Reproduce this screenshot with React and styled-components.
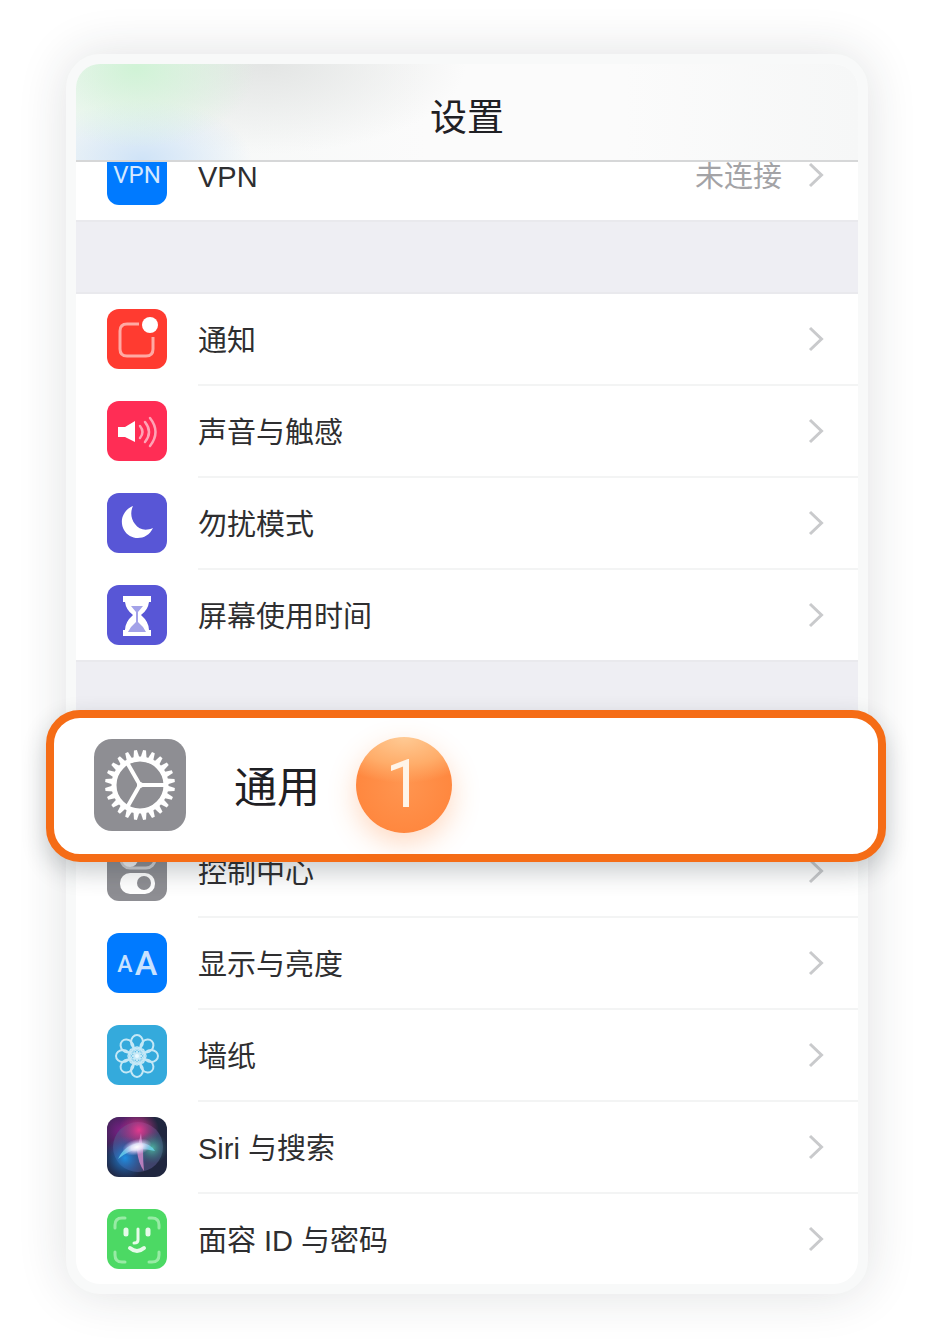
import React from "react";
import styled, { createGlobalStyle } from "styled-components";

const GlobalStyle = createGlobalStyle`
  * {
    box-sizing: border-box;
  }
  body {
    margin: 0;
    background: #ffffff;
    font-family: "Liberation Sans", "Noto Sans CJK SC", sans-serif;
    color: #2e2e30;
  }
`;

const Page = styled.main`
  padding: 54px 62px 50px 66px;
`;

const Phone = styled.div`
  border: 10px solid #f8f9f9;
  border-radius: 34px;
  background-color: white;
  box-shadow: 0 0 50px rgba(35, 40, 50, 0.14);
`;

const Header = styled.header`
  position: relative;
  z-index: 1;
  display: flex;
  align-items: center;
  justify-content: center;
  height: 98px;
  padding-top: 14px;
  border-bottom: 2px solid #d6d7d8;
  border-radius: 24px 24px 0 0;
  background:
    radial-gradient(ellipse 120px 80px at 60px 4px, #d0f3d6, transparent),
    radial-gradient(ellipse 110px 60px at 66px 96px, #cfe3f7, transparent),
    radial-gradient(ellipse 200px 90px at 190px 0, #e3e5e4, transparent),
    linear-gradient(90deg, #f4f7f6, #fbfbfb 45%, #fbfbfb 70%, #f6f7f7);
`;

const Title = styled.h1`
  margin: 0;
  font-size: 37px;
  line-height: 48px;
  font-weight: 400;
  color: #1f2024;
`;

const Content = styled.div`
  margin-top: -32px;
`;

const Group = styled.ul`
  margin: 0;
  padding: 0;
  list-style: none;
`;

const Gap = styled.div`
  height: 74px;
  background-color: #eeeef3;
  border-top: 2px solid #e9e9ed;
  border-bottom: 2px solid #e9e9ed;
`;

const Item = styled.li`
  position: relative;
`;

const Row = styled.a`
  display: flex;
  gap: 31px;
  padding-left: 31px;
  color: inherit;
  text-decoration: none;
`;

const Body = styled.span`
  flex: 1;
  display: flex;
  align-items: center;
  height: ${(props) => (props.$last ? "90px" : "92px")};
  padding-right: 34px;
  border-bottom: ${(props) => (props.$last ? "none" : "2px solid #f3f4f4")};
`;

const Label = styled.span`
  flex: 1;
  padding-top: 4px;
  font-size: 29px;
  line-height: 40px;
`;

const Value = styled.span`
  margin-right: 26px;
  padding-top: 4px;
  font-size: 29px;
  line-height: 40px;
  color: #a3a3a6;
`;

const Tile = styled.svg`
  flex: none;
  width: ${(props) => props.$size || 60}px;
  height: ${(props) => props.$size || 60}px;
  margin: ${(props) => (props.$size ? "0" : "15px 0")};
  border-radius: ${(props) => (props.$size ? "18px" : "12px")};
  background-color: ${(props) => props.$color};
`;

const Arrow = styled.svg`
  width: 16px;
  height: 26px;
`;

const Callout = styled.a`
  position: absolute;
  z-index: 2;
  top: -24px;
  bottom: -36px;
  left: -30px;
  right: -28px;
  display: flex;
  align-items: center;
  padding: 0 40px 2px;
  border: 8px solid #f56c16;
  border-radius: 34px;
  background-color: white;
  color: #1f2024;
  text-decoration: none;
  box-shadow: 0 10px 24px rgba(30, 40, 50, 0.24);
`;

const CalloutLabel = styled.span`
  margin: 0 36px 0 48px;
  padding-top: 6px;
  font-size: 43px;
  line-height: 56px;
`;

const Badge = styled.span`
  display: flex;
  align-items: center;
  justify-content: center;
  width: 96px;
  height: 96px;
  border-radius: 50%;
  background:
    radial-gradient(ellipse 80px 46px at 50% 0, #ffca94, #ffad6a 60%, transparent),
    radial-gradient(circle at 50% 50%, #ff9550, #ff8238);
  box-shadow: 0 10px 28px rgba(255, 130, 50, 0.3);
  color: #fff4e8;
  font-family: Roboto, "Liberation Sans", sans-serif;
  font-size: 66px;
  line-height: 64px;
  font-weight: 400;
`;

const Chevron = () => (
  <Arrow viewBox="0 0 16 26" fill="none" aria-hidden="true">
    <path d="M2 2 L13.500 13 L2 24" stroke="#c9cacc" strokeWidth="3" />
  </Arrow>
);

const VpnIcon = () => (
  <Tile viewBox="0 0 60 60" $color="#007aff" aria-hidden="true">
    <text x="30" y="38" textAnchor="middle" fontFamily="Roboto, sans-serif" fontSize="24" fill="#d3e8ff">
      VPN
    </text>
  </Tile>
);

const NoticeIcon = () => (
  <Tile viewBox="0 0 60 60" $color="#ff3b30" aria-hidden="true">
    <path
      d="M32 15 H20 Q13 15 13 22 V40 Q13 47 20 47 H39 Q46 47 46 40 V28"
      fill="none"
      stroke="#ffa9a3"
      strokeWidth="3"
    />
    <circle cx="43" cy="16" r="8" fill="#fff" />
  </Tile>
);

const SoundIcon = () => (
  <Tile viewBox="0 0 60 60" $color="#ff2d55" aria-hidden="true">
    <path d="M11 26 H18 L28 20 V41 L18 36 H11 Z" fill="#fff" />
    <g fill="none" stroke="#ffa3b5" strokeWidth="2.500" strokeLinecap="round">
      <path d="M33 25 Q38 31 33 37" />
      <path d="M38 21 Q46 31 38 41" />
      <path d="M43 17 Q54 31 43 45" />
    </g>
  </Tile>
);

const MoonIcon = () => (
  <Tile viewBox="0 0 60 60" $color="#5856d6" aria-hidden="true">
    <path
      d="M26 13 C16 17 12 28 17 37 C23 48 40 48 46 35 C39 38 32 37 28 31 C24 26 23 19 26 13 Z"
      fill="#fff"
    />
  </Tile>
);

const HourglassIcon = () => (
  <Tile viewBox="0 0 60 60" $color="#5856d6" aria-hidden="true">
    <path
      d="M16 11 H44 V17 H42 Q41 25 34 30 Q42 37 42 45 H44 V51 H16 V45 H18 Q18 37 26 30 Q19 25 18 17 H16 Z"
      fill="#fff"
    />
    <path d="M24 21 H36 L31 27 V37 Q36 41 39 47 H21 Q24 41 29 37 V27 Z" fill="#5856d6" opacity="0.55" />
  </Tile>
);

const teeth = Array.from({ length: 24 }, (_, i) => i * 15 + 7.5);

const GearIcon = () => (
  <Tile viewBox="0 0 92 92" $color="#8e8e93" $size={92} aria-hidden="true">
    <g transform="translate(46 46)" fill="#fff">
      {teeth.map((angle) => (
        <path key={angle} d="M27 -3 L35 -1.500 V1.500 L27 3 Z" transform={`rotate(${angle})`} />
      ))}
      <circle r="26" fill="none" stroke="#fff" strokeWidth="5" />
      {[0, 120, 240].map((angle) => (
        <path key={angle} d="M1 0 H25" stroke="#fff" strokeWidth="4" transform={`rotate(${angle})`} />
      ))}
      <circle r="3" />
    </g>
  </Tile>
);

const ControlIcon = () => (
  <Tile viewBox="0 0 60 60" $color="#8e8e93" aria-hidden="true">
    <rect x="14" y="9" width="34" height="18" rx="9" fill="none" stroke="#d0d0d3" strokeWidth="3" />
    <circle cx="23" cy="18" r="8" fill="#f2f2f3" />
    <rect x="13" y="32" width="35" height="21" rx="10" fill="#fff" />
    <circle cx="37" cy="42" r="7" fill="#8e8e93" />
  </Tile>
);

const DisplayIcon = () => (
  <Tile viewBox="0 0 60 60" $color="#007aff" aria-hidden="true">
    <g fontFamily="Roboto, sans-serif" fill="#c8e2ff" textAnchor="middle">
      <text x="18" y="39" fontSize="23" fontWeight="500">
        A
      </text>
      <text x="39" y="42" fontSize="34" fontWeight="500">
        A
      </text>
    </g>
  </Tile>
);

const petals = [0, 45, 90, 135, 180, 225, 270, 315];

const WallpaperIcon = () => (
  <Tile viewBox="0 0 60 60" $color="#34aadc" aria-hidden="true">
    <g transform="translate(30 31)" fill="none" stroke="#c5e8f6" strokeWidth="2">
      {petals.map((angle) => (
        <g key={angle} transform={`rotate(${angle})`}>
          <ellipse cx="0" cy="-14" rx="6" ry="7" />
          <ellipse cx="0" cy="-5" rx="3" ry="4" strokeWidth="1.500" />
        </g>
      ))}
      <circle r="3" fill="#e8f8ff" />
    </g>
  </Tile>
);

const SiriIcon = () => (
  <Tile viewBox="0 0 60 60" $color="#20263f" aria-hidden="true">
    <defs>
      <radialGradient id="siriPurple">
        <stop offset="0" stopColor="#7a1f86" />
        <stop offset="1" stopColor="#7a1f86" stopOpacity="0" />
      </radialGradient>
      <radialGradient id="siriPink">
        <stop offset="0" stopColor="#e23a8e" />
        <stop offset="1" stopColor="#c22c86" stopOpacity="0" />
      </radialGradient>
      <radialGradient id="siriBlue">
        <stop offset="0" stopColor="#1f8fe0" />
        <stop offset="1" stopColor="#2260b8" stopOpacity="0" />
      </radialGradient>
      <radialGradient id="siriTeal">
        <stop offset="0" stopColor="#4fb3a0" />
        <stop offset="1" stopColor="#2b6e77" stopOpacity="0" />
      </radialGradient>
      <radialGradient id="siriGlow">
        <stop offset="0" stopColor="#ffffff" />
        <stop offset="0.4" stopColor="#ece6fb" stopOpacity="0.9" />
        <stop offset="1" stopColor="#c9b8f5" stopOpacity="0" />
      </radialGradient>
    </defs>
    <circle cx="14" cy="14" r="28" fill="url(#siriPurple)" />
    <circle cx="31" cy="30" r="25" fill="#56568a" opacity="0.6" />
    <circle cx="32" cy="13" r="20" fill="url(#siriPink)" />
    <circle cx="18" cy="41" r="22" fill="url(#siriBlue)" />
    <circle cx="45" cy="31" r="16" fill="url(#siriTeal)" />
    <path d="M11 42 Q18 27 33 26 Q43 26 48 34 Q40 32 32 32 Q22 33 11 42 Z" fill="#6fd8f2" opacity="0.75" />
    <path d="M34 16 Q35 26 36 32 Q36 44 37 54 Q31 46 30 33 Z" fill="#e08fd0" opacity="0.75" />
    <ellipse cx="30" cy="30" rx="15" ry="8" fill="url(#siriGlow)" transform="rotate(-14 30 30)" />
  </Tile>
);

const FaceIcon = () => (
  <Tile viewBox="0 0 60 60" $color="#4cd964" aria-hidden="true">
    <g fill="none" strokeLinecap="round">
      <g stroke="#98eba5" strokeWidth="3">
        <path d="M8 19 V16 Q8 9 15 9 H18" />
        <path d="M42 9 H45 Q52 9 52 16 V19" />
        <path d="M8 43 V46 Q8 53 15 53 H18" />
        <path d="M42 53 H45 Q52 53 52 46 V43" />
      </g>
      <g stroke="#e6fbe9">
        <path d="M19 21 V25 M41 21 V25" strokeWidth="5" />
        <path d="M31 20 V31 Q31 34 27 34" strokeWidth="3" />
        <path d="M23 39 Q30 45 37 39" strokeWidth="4" />
      </g>
    </g>
  </Tile>
);

const network = [{ label: "VPN", value: "未连接", icon: VpnIcon }];

const alerts = [
  { label: "通知", icon: NoticeIcon },
  { label: "声音与触感", icon: SoundIcon },
  { label: "勿扰模式", icon: MoonIcon },
  { label: "屏幕使用时间", icon: HourglassIcon },
];

const general = [
  { label: "通用", icon: GearIcon, step: 1 },
  { label: "控制中心", icon: ControlIcon },
  { label: "显示与亮度", icon: DisplayIcon },
  { label: "墙纸", icon: WallpaperIcon },
  { label: "Siri 与搜索", icon: SiriIcon },
  { label: "面容 ID 与密码", icon: FaceIcon },
];

const SettingsGroup = ({ items }) => (
  <Group>
    {items.map(({ label, value, step, icon: Icon }, index) => (
      <Item key={label}>
        {step ? (
          <>
            <Body />
            <Callout href="#">
              <Icon />
              <CalloutLabel>{label}</CalloutLabel>
              <Badge>{step}</Badge>
            </Callout>
          </>
        ) : (
          <Row href="#">
            <Icon />
            <Body $last={index === items.length - 1}>
              <Label>{label}</Label>
              {value && <Value>{value}</Value>}
              <Chevron />
            </Body>
          </Row>
        )}
      </Item>
    ))}
  </Group>
);

const App = () => {
  return (
    <>
      <GlobalStyle />
      <Page>
        <Phone>
          <Header>
            <Title>设置</Title>
          </Header>
          <Content>
            <SettingsGroup items={network} />
            <Gap />
            <SettingsGroup items={alerts} />
            <Gap />
            <SettingsGroup items={general} />
          </Content>
        </Phone>
      </Page>
    </>
  );
};

export default App;
